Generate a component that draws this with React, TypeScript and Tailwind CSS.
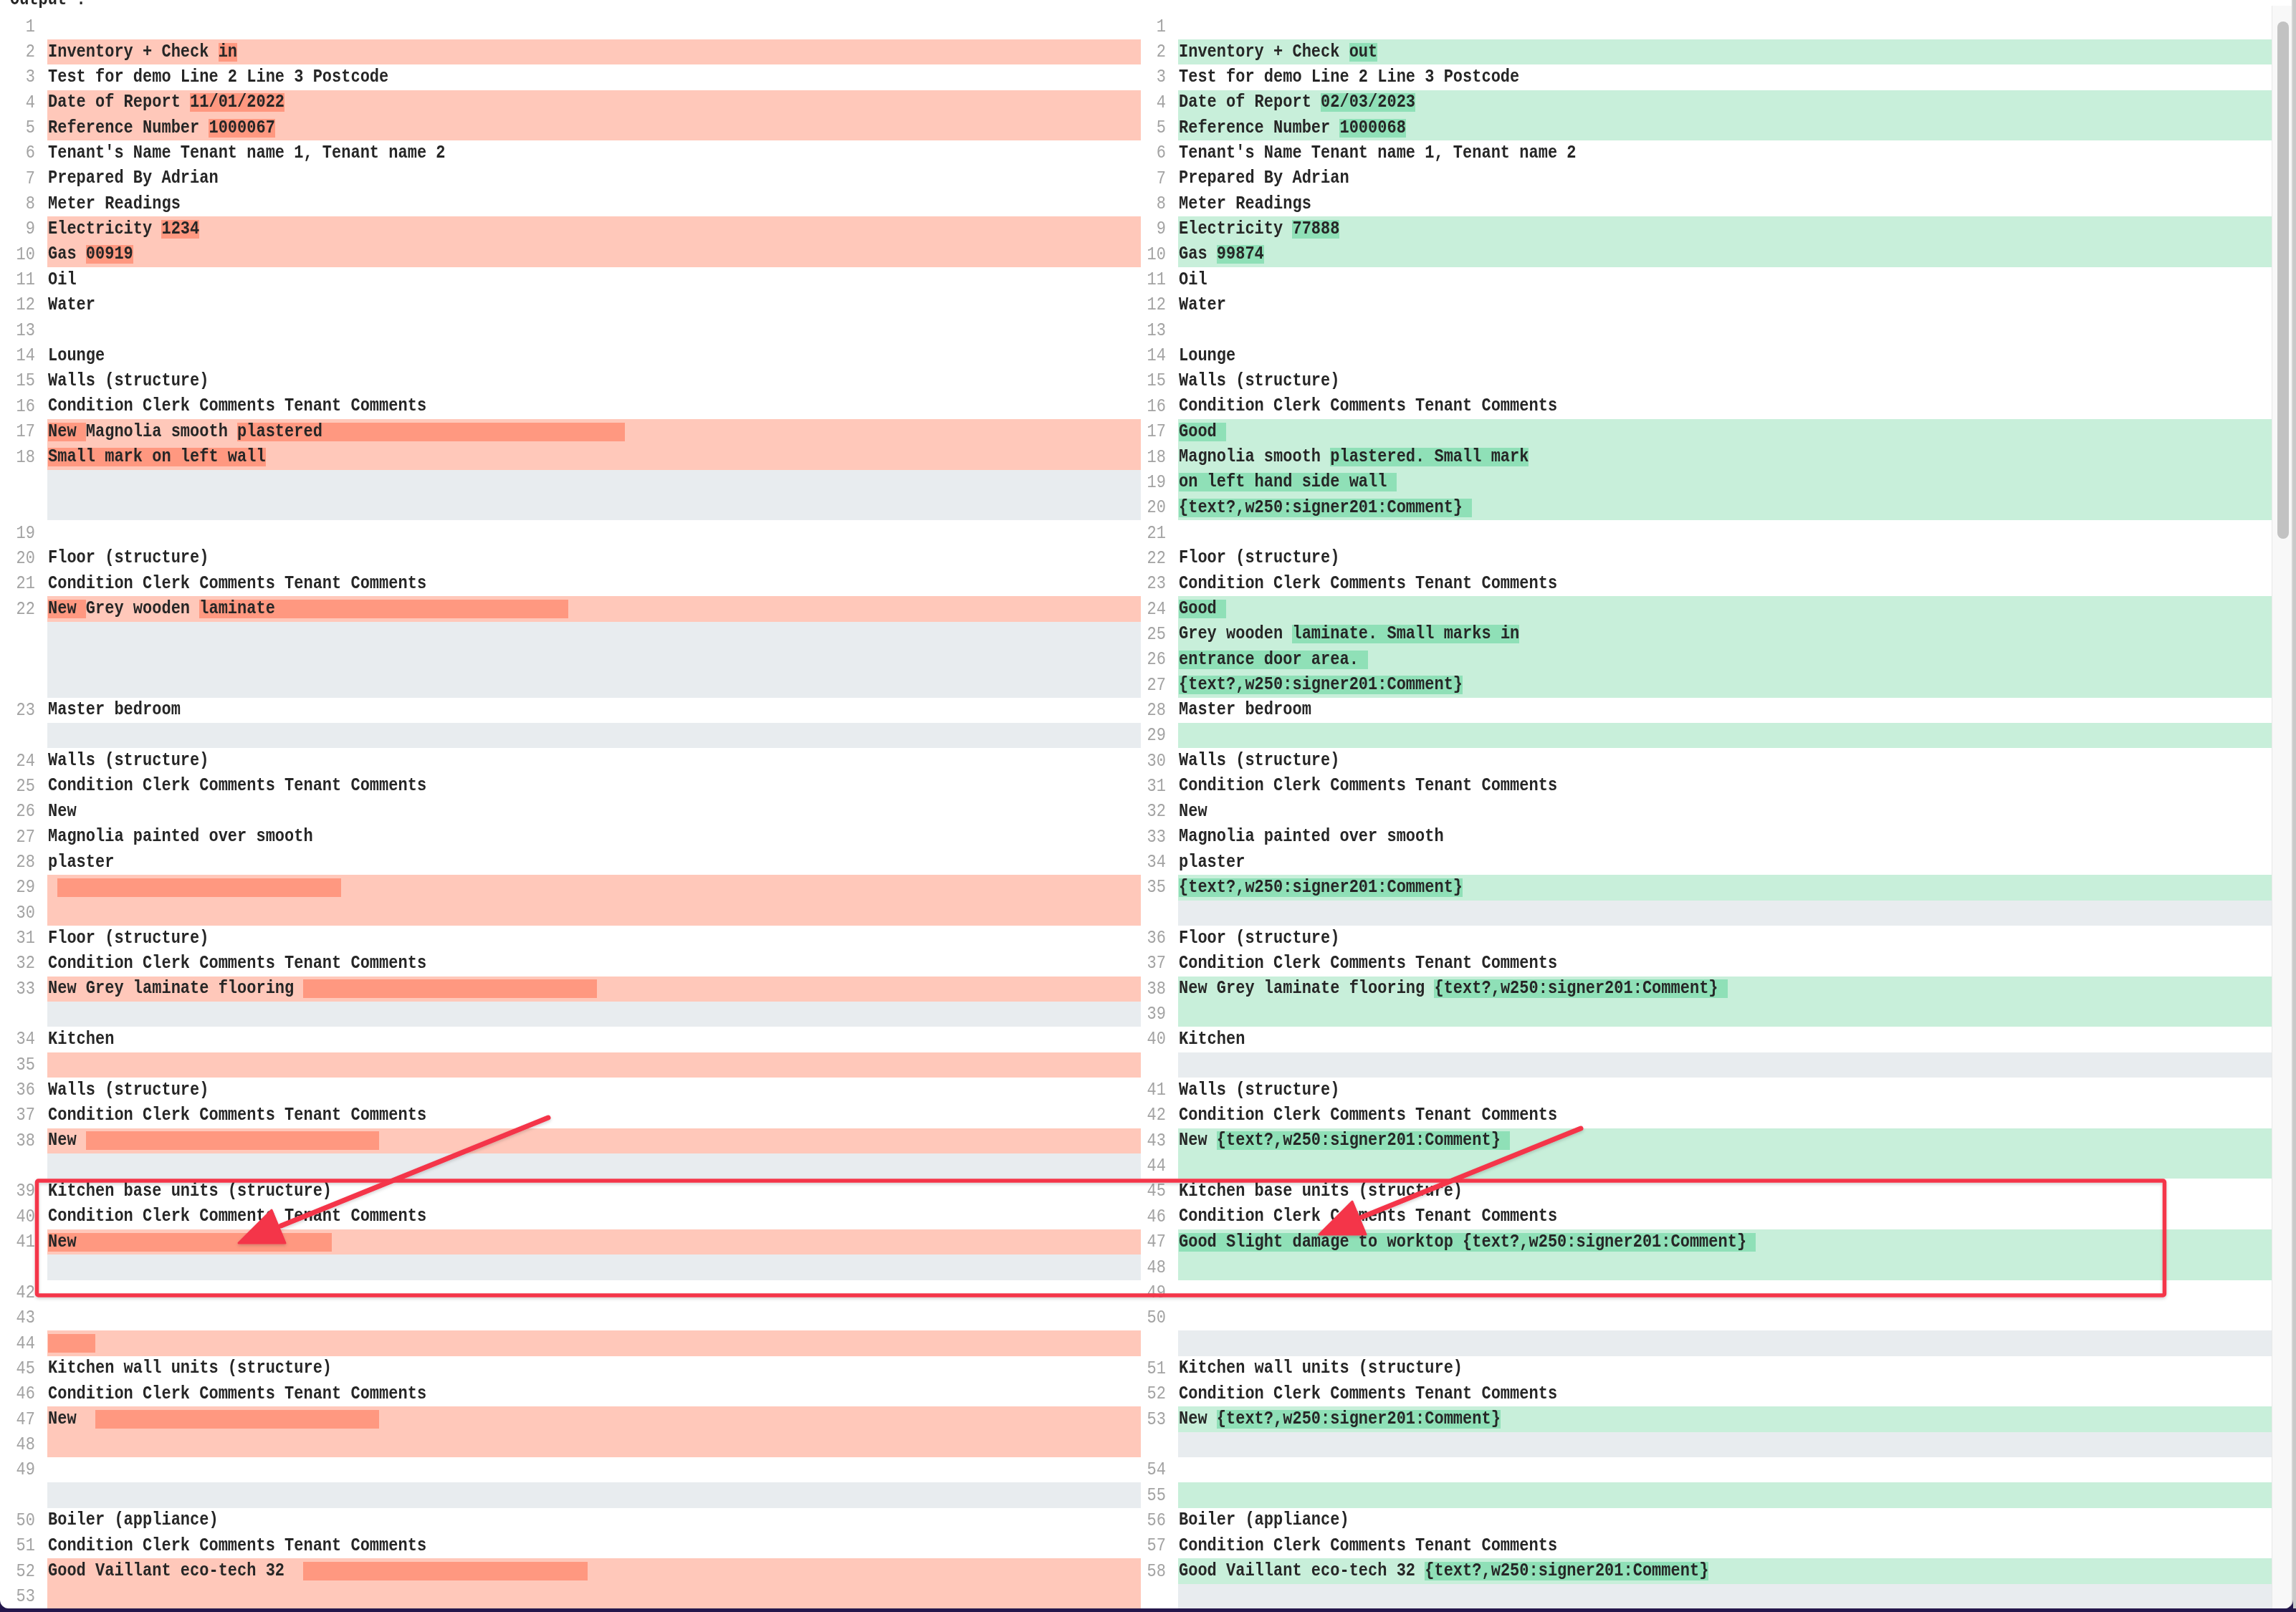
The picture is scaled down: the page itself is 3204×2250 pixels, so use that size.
import React from 'react';

type Part = { t: string; hl?: boolean };
type Kind = 'ctx' | 'del' | 'add' | 'fill';
type Row = { n?: number; kind: Kind; parts: Part[] };

const TAG = '{text?,w250:signer201:Comment}';
const COND = 'Condition Clerk Comments Tenant Comments';
const sp = (k: number) => ' '.repeat(k);

const h = (t: string): Part => ({ t, hl: true });
const toParts = (xs: (string | Part)[]) => xs.map((x) => (typeof x === 'string' ? { t: x } : x));

const ctx = (n: number, t = ''): Row => ({ n, kind: 'ctx', parts: t ? [{ t }] : [] });
const del = (n: number, ...xs: (string | Part)[]): Row => ({ n, kind: 'del', parts: toParts(xs) });
const add = (n: number, ...xs: (string | Part)[]): Row => ({ n, kind: 'add', parts: toParts(xs) });
const fill = (): Row => ({ kind: 'fill', parts: [] });

const leftRows: Row[] = [
  ctx(1),
  del(2, 'Inventory + Check ', h('in')),
  ctx(3, 'Test for demo Line 2 Line 3 Postcode'),
  del(4, 'Date of Report ', h('11/01/2022')),
  del(5, 'Reference Number ', h('1000067')),
  ctx(6, "Tenant's Name Tenant name 1, Tenant name 2"),
  ctx(7, 'Prepared By Adrian'),
  ctx(8, 'Meter Readings'),
  del(9, 'Electricity ', h('1234')),
  del(10, 'Gas ', h('00919')),
  ctx(11, 'Oil'),
  ctx(12, 'Water'),
  ctx(13),
  ctx(14, 'Lounge'),
  ctx(15, 'Walls (structure)'),
  ctx(16, COND),
  del(17, h('New '), 'Magnolia smooth ', h('plastered' + sp(32))),
  del(18, h('Small mark on left wall')),
  fill(),
  fill(),
  ctx(19),
  ctx(20, 'Floor (structure)'),
  ctx(21, COND),
  del(22, h('New '), 'Grey wooden ', h('laminate' + sp(31))),
  fill(),
  fill(),
  fill(),
  ctx(23, 'Master bedroom'),
  fill(),
  ctx(24, 'Walls (structure)'),
  ctx(25, COND),
  ctx(26, 'New'),
  ctx(27, 'Magnolia painted over smooth'),
  ctx(28, 'plaster'),
  del(29, ' ', h(sp(30))),
  del(30),
  ctx(31, 'Floor (structure)'),
  ctx(32, COND),
  del(33, 'New Grey laminate flooring ', h(sp(31))),
  fill(),
  ctx(34, 'Kitchen'),
  del(35),
  ctx(36, 'Walls (structure)'),
  ctx(37, COND),
  del(38, 'New ', h(sp(31))),
  fill(),
  ctx(39, 'Kitchen base units (structure)'),
  ctx(40, COND),
  del(41, h('New' + sp(27))),
  fill(),
  ctx(42),
  ctx(43),
  del(44, h(sp(5))),
  ctx(45, 'Kitchen wall units (structure)'),
  ctx(46, COND),
  del(47, 'New  ', h(sp(30))),
  del(48),
  ctx(49),
  fill(),
  ctx(50, 'Boiler (appliance)'),
  ctx(51, COND),
  del(52, 'Good Vaillant eco-tech 32  ', h(sp(30))),
  del(53),
];

const rightRows: Row[] = [
  ctx(1),
  add(2, 'Inventory + Check ', h('out')),
  ctx(3, 'Test for demo Line 2 Line 3 Postcode'),
  add(4, 'Date of Report ', h('02/03/2023')),
  add(5, 'Reference Number ', h('1000068')),
  ctx(6, "Tenant's Name Tenant name 1, Tenant name 2"),
  ctx(7, 'Prepared By Adrian'),
  ctx(8, 'Meter Readings'),
  add(9, 'Electricity ', h('77888')),
  add(10, 'Gas ', h('99874')),
  ctx(11, 'Oil'),
  ctx(12, 'Water'),
  ctx(13),
  ctx(14, 'Lounge'),
  ctx(15, 'Walls (structure)'),
  ctx(16, COND),
  add(17, h('Good ')),
  add(18, 'Magnolia smooth ', h('plastered. Small mark')),
  add(19, h('on left hand side wall ')),
  add(20, h(TAG + ' ')),
  ctx(21),
  ctx(22, 'Floor (structure)'),
  ctx(23, COND),
  add(24, h('Good ')),
  add(25, 'Grey wooden ', h('laminate. Small marks in')),
  add(26, h('entrance door area. ')),
  add(27, h(TAG)),
  ctx(28, 'Master bedroom'),
  add(29),
  ctx(30, 'Walls (structure)'),
  ctx(31, COND),
  ctx(32, 'New'),
  ctx(33, 'Magnolia painted over smooth'),
  ctx(34, 'plaster'),
  add(35, h(TAG)),
  fill(),
  ctx(36, 'Floor (structure)'),
  ctx(37, COND),
  add(38, 'New Grey laminate flooring ', h(TAG + ' ')),
  add(39),
  ctx(40, 'Kitchen'),
  fill(),
  ctx(41, 'Walls (structure)'),
  ctx(42, COND),
  add(43, 'New ', h(TAG + ' ')),
  add(44),
  ctx(45, 'Kitchen base units (structure)'),
  ctx(46, COND),
  add(47, h('Good Slight damage to worktop ' + TAG + ' ')),
  add(48),
  ctx(49),
  ctx(50),
  fill(),
  ctx(51, 'Kitchen wall units (structure)'),
  ctx(52, COND),
  add(53, 'New ', h(TAG)),
  fill(),
  ctx(54),
  add(55),
  ctx(56, 'Boiler (appliance)'),
  ctx(57, COND),
  add(58, 'Good Vaillant eco-tech 32 ', h(TAG)),
  fill(),
];

const rowBg: Record<Kind, string> = {
  ctx: '',
  del: 'bg-[#ffc8ba]',
  add: 'bg-[#c8efda]',
  fill: 'bg-[#e8ecef]',
};

function DiffRow({ row }: { row: Row }) {
  const word = row.kind === 'del' ? 'bg-[#ff9880]' : 'bg-[#8fe0b7]';
  return (
    <div className="flex h-[35.35px] shrink-0">
      <div className="flex w-[52px] shrink-0 items-center justify-end pr-[17px] text-[#a3a3a3]">
        <span className="inline-block scale-y-[1.18]">{row.n}</span>
      </div>
      <div className={`flex flex-1 items-center pl-px ${rowBg[row.kind]}`}>
        <div className="flex scale-y-[1.18] whitespace-pre font-bold text-[#262626]">
          {row.parts.map((pt, i) => (
            <span key={i} className={pt.hl ? `${word} inline-block h-[22px] leading-[22px]` : 'inline-block h-[22px] leading-[22px]'}>
              {pt.t}
            </span>
          ))}
        </div>
      </div>
    </div>
  );
}

function Panel({ rows }: { rows: Row[] }) {
  return (
    <div className="flex w-[1578px] shrink-0 flex-col">
      {rows.map((r, i) => (
        <DiffRow key={i} row={r} />
      ))}
    </div>
  );
}

export default function App() {
  return (
    <div className="relative h-[2250px] w-[3204px] overflow-hidden bg-[#24174c] font-['Liberation_Mono',monospace] text-[22px]">
      <div className="flex h-[2245px] w-[3200px] items-start overflow-hidden rounded-b-[12px] border-r-2 border-[#d4d4d4] bg-white">
        <div className="flex shrink-0 flex-col pl-[14px]">
          <div className="h-[19.5px] shrink-0 overflow-hidden">
            <div className="-mt-[11px] scale-y-[1.18] font-bold leading-[22px] text-[#262626]">Output :</div>
          </div>
          <div className="flex shrink-0">
            <Panel rows={leftRows} />
            <Panel rows={rightRows} />
          </div>
        </div>
        <div className="h-full w-[28px] shrink-0 pt-[8px]">
          <div className="h-full border-l border-[#e8e8e8] bg-[#f8f8f8] pl-[7px] pt-[22px]">
            <div className="h-[722px] w-[16px] rounded-full bg-[#c2c2c2]" />
          </div>
        </div>
      </div>
      <div className="absolute right-0 top-0 h-[2245px] w-[4px] bg-[#c9c9c9]" />

      <svg className="pointer-events-none absolute inset-0" width="3204" height="2250" viewBox="0 0 3204 2250">
        <defs>
          <filter id="sh" x="-5%" y="-5%" width="110%" height="110%">
            <feDropShadow dx="0" dy="2" stdDeviation="2" floodColor="#000" floodOpacity="0.18" />
          </filter>
        </defs>
        <g filter="url(#sh)" fill="none" stroke="#f4344a" strokeLinecap="round" strokeLinejoin="round">
          <rect x="51.5" y="1648" width="2969" height="160" rx="2" strokeWidth="5.5" />
          <line x1="765" y1="1560" x2="392" y2="1711" strokeWidth="7" />
          <polygon points="333,1735 379,1689 398,1735" fill="#f4344a" strokeWidth="3" />
          <line x1="2206" y1="1575" x2="1900" y2="1699" strokeWidth="7" />
          <polygon points="1841,1723 1887,1677 1906,1723" fill="#f4344a" strokeWidth="3" />
        </g>
      </svg>
    </div>
  );
}
